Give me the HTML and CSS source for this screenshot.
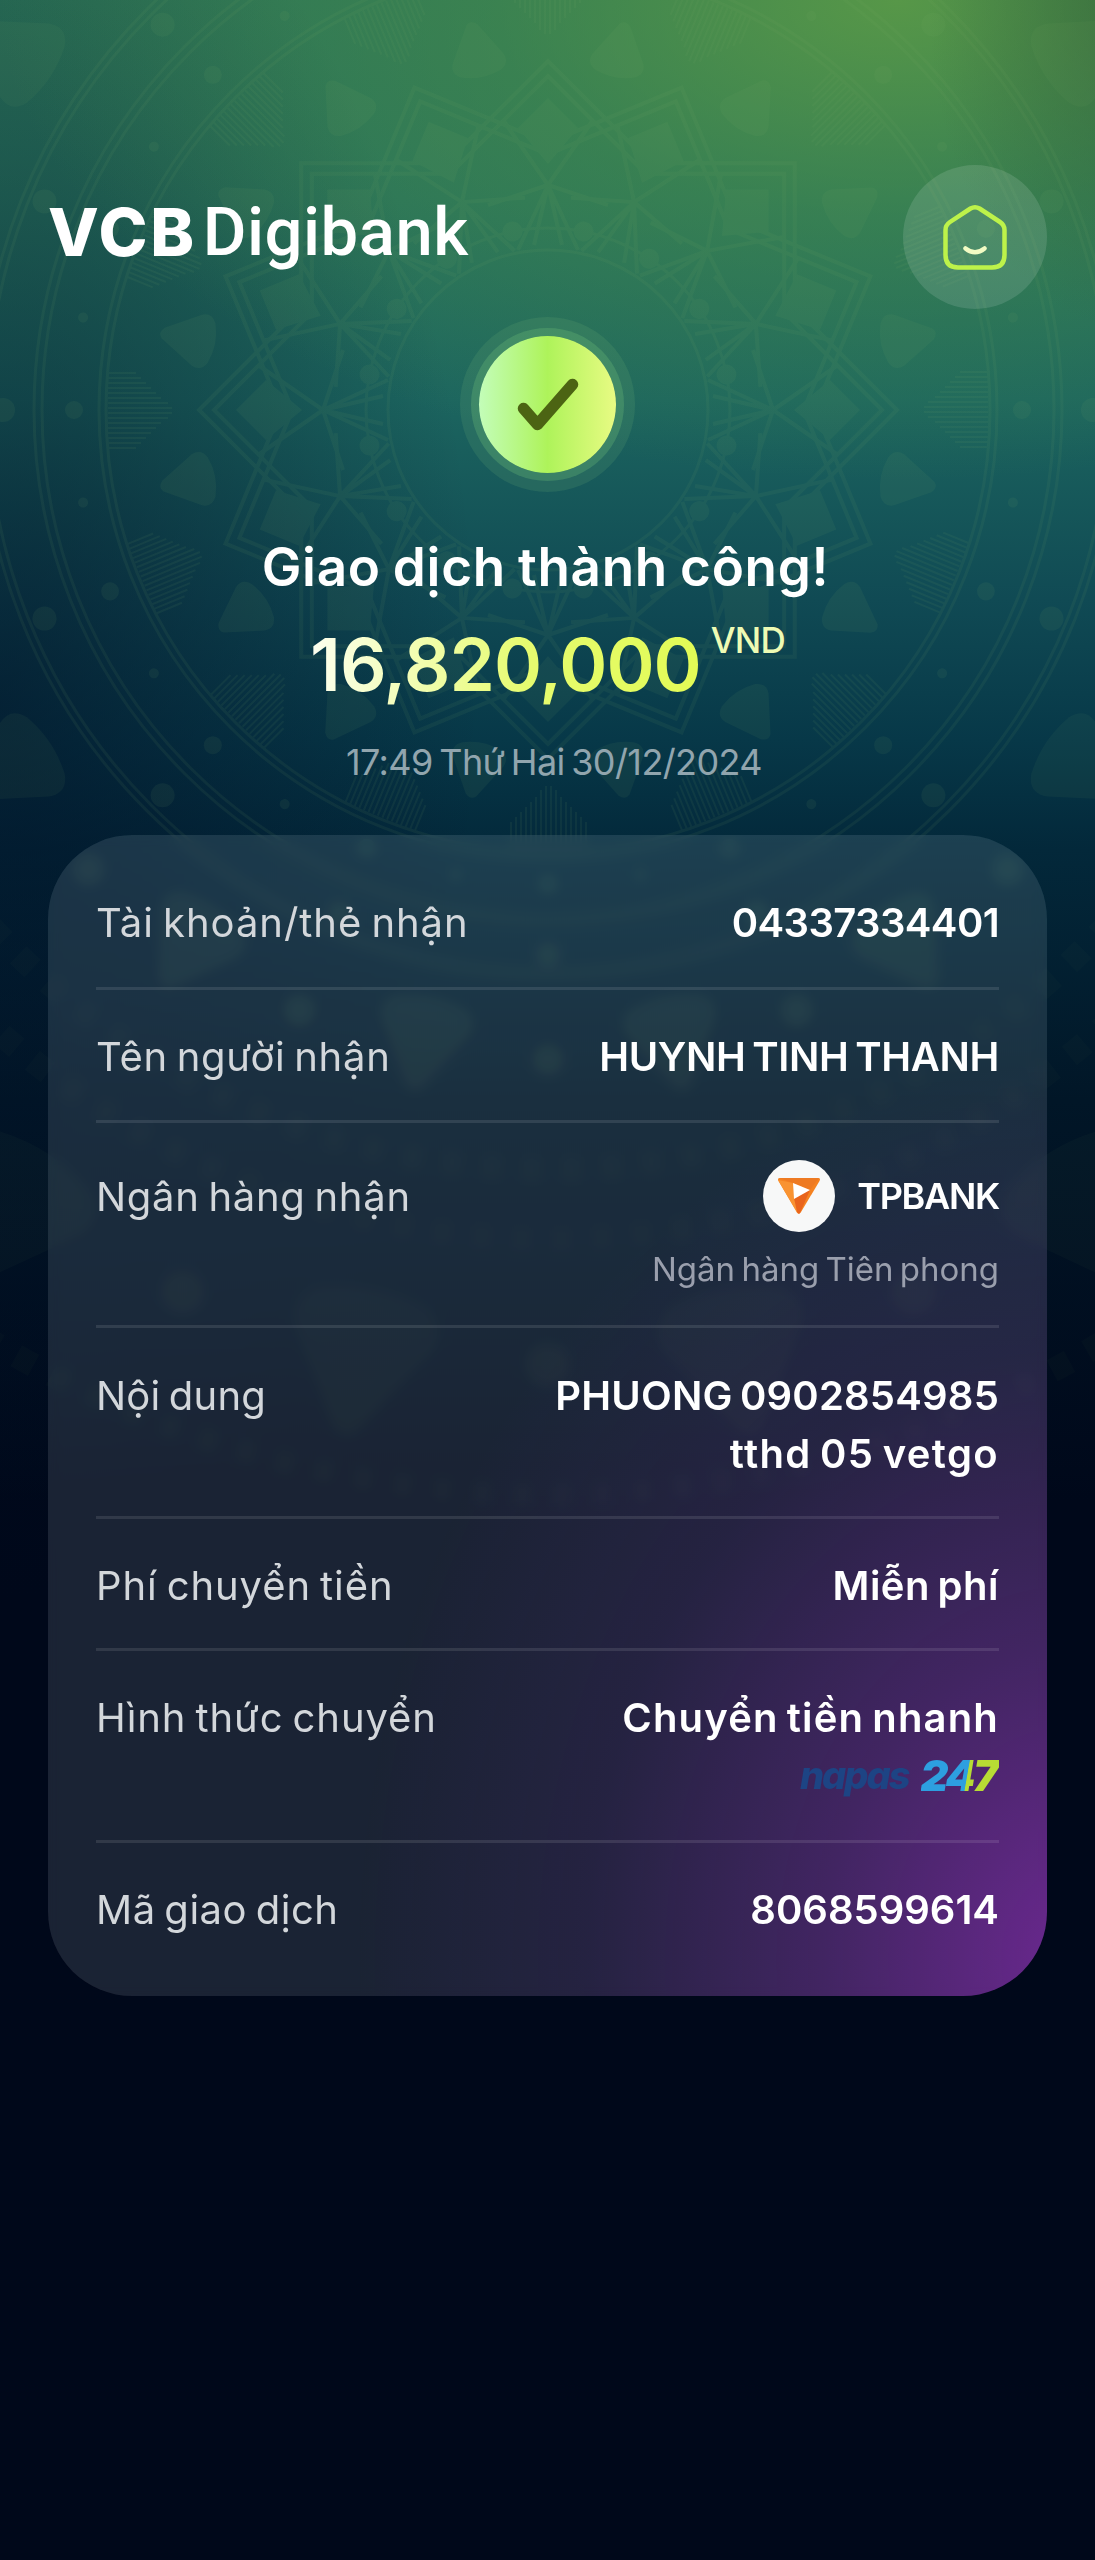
FILE: index.html
```html
<!DOCTYPE html>
<html lang="vi">
<head>
<meta charset="utf-8">
<title>VCB Digibank</title>
<link rel="stylesheet" href="styles.css">
</head>
<body>
<main class="screen">
  <svg class="mandala" viewBox="-1100 -1100 2200 2200" aria-hidden="true">
    <defs>
      <g id="wedge">
        <path d="M-112-237 0-349 112-237M-92-242 0-334 92-242M0-225-45-290M0-225 45-290M0-225-30-160M0-225 30-160M0-225-14-165M0-225 14-165M0-225-60-205M0-225 60-205" fill="none" stroke="currentColor" stroke-width="4"/>
        <path d="M0-312 30-282 0-246-30-282Z" fill="currentColor"/>
        <path d="M-38-440V-412M-33-440V-407M-28-440V-402M-23-440V-397M-18-440V-392M-13-440V-387M-8-440V-380M-3-440V-376M2-440V-376M7-440V-380M12-440V-387M17-440V-392M22-440V-397M27-440V-402M32-440V-407M37-440V-412" fill="none" stroke="currentColor" stroke-width="2"/>
        <circle cx="0" cy="-474" r="9" fill="currentColor"/>
        <circle cx="0" cy="-545" r="12" fill="currentColor"/>
        <circle cx="0" cy="-650" r="15" fill="currentColor"/>
        <circle cx="0" cy="-955" r="22" fill="currentColor" opacity=".6"/>
        <g transform="rotate(11.25)" fill="currentColor">
          <path d="M-5-393Q0-398 6-392L26-358Q30-348 20-343Q0-336-20-343Q-30-348-26-358Z"/>
          <path d="M-8-690Q0-698 9-688L44-630Q52-612 34-604Q0-594-34-604Q-52-612-44-630Z" opacity=".8"/>
          <path d="M-12-1040Q0-1052 14-1038L70-945Q80-920 54-904Q0-888-54-904Q-80-920-70-945Z" opacity=".45"/>
          <circle cx="0" cy="-182" r="10"/>
          <circle cx="0" cy="-474" r="5"/>
        </g>
      </g>
      <g id="w2"><use href="#wedge"/><use href="#wedge" transform="rotate(22.5)"/></g>
      <g id="w4"><use href="#w2"/><use href="#w2" transform="rotate(45)"/></g>
      <g id="w8"><use href="#w4"/><use href="#w4" transform="rotate(90)"/></g>
    </defs>
    <use href="#w8"/><use href="#w8" transform="rotate(180)"/>
    <g fill="none" stroke="currentColor" stroke-width="3">
      <circle r="160"/><circle r="182"/><circle r="442"/><circle r="449"/><circle r="506"/><circle r="514"/>
      <circle r="560"/><circle r="567"/>
    </g>
    <g fill="none" stroke="currentColor" stroke-width="24" stroke-dasharray="20 20" opacity=".3">
      <circle r="760"/><circle r="830"/><circle r="1085"/>
    </g>
  </svg>

  <header class="top">
    <div class="brand"><span class="brand-vcb">VCB</span><span class="brand-digi">Digibank</span></div>
    <div class="home">
      <svg viewBox="0 0 66 66" width="66" height="66" fill="none" stroke-linecap="round" stroke-linejoin="round">
        <path d="M28.500 4.500Q33 2 37.500 4.500L58 18Q62.500 21 62.500 26V51Q62.500 63.500 50 63.500H16Q3.500 63.500 3.500 51V26Q3.500 21 8 18Z" stroke="#bdf24a" stroke-width="4.500"/>
        <path d="M23.500 44.500Q33 52 42.500 44.500" stroke="#f2fbc4" stroke-width="4.500"/>
      </svg>
    </div>
  </header>

  <section class="result">
    <div class="badge">
      <svg viewBox="0 0 62 54" width="62" height="54" fill="none" stroke="#4c6413" stroke-width="11.500" stroke-linecap="round" stroke-linejoin="round"><path d="M6.500 30.500 20.500 46.500 55.500 6.500"/></svg>
    </div>
    <h1 class="title">Giao dịch thành công!</h1>
    <div class="amount"><span class="sum">16,820,000</span><span class="cur">VND</span></div>
    <div class="date">17:49 Thứ Hai 30/12/2024</div>
  </section>

  <section class="card">
    <div class="row r1"><span class="label">Tài khoản/thẻ nhận</span><span class="value">04337334401</span></div>
    <div class="row r2"><span class="label">Tên người nhận</span><span class="value">HUYNH TINH THANH</span></div>
    <div class="row r3"><span class="label">Ngân hàng nhận</span>
      <div class="stack">
        <div class="bank">
          <span class="bank-logo">
            <svg viewBox="0 0 44 40" width="44" height="40">
              <path d="M3 1H41Q44 1 42.500 4L24 35Q22 38 20 35L1.500 4Q0 1 3 1Z" fill="#f58220"/>
              <path d="M2 1H42L33 13 16 6Z" fill="#ee7a22"/>
              <path d="M1 3 16 6 17 21 22 37Q20 37 19 34Z" fill="#f99331"/>
              <path d="M17 21 33 13 23 36Q22 38 20 35Z" fill="#e9641c"/>
              <path d="M16 6 33 13 17 22Z" fill="#fff"/>
            </svg>
          </span>
          <span class="bank-name">TPBANK</span>
        </div>
        <span class="bank-full">Ngân hàng Tiên phong</span>
      </div>
    </div>
    <div class="row r4"><span class="label">Nội dung</span>
      <div class="stack"><span class="value">PHUONG 0902854985</span><span class="value value-note">tthd 05 vetgo</span></div>
    </div>
    <div class="row r5"><span class="label">Phí chuyển tiền</span><span class="value">Miễn phí</span></div>
    <div class="row r6"><span class="label">Hình thức chuyển</span>
      <div class="stack"><span class="value">Chuyển tiền nhanh</span>
        <div class="napas"><span class="napas-word">napas</span><span class="napas-num">247</span></div>
      </div>
    </div>
    <div class="row r7"><span class="label">Mã giao dịch</span><span class="value">8068599614</span></div>
  </section>
</main>
</body>
</html>
```
FILE: styles.css
```css
* { box-sizing: border-box; }
body { margin: 0; background: #00081a; font-family: Inter, "Noto Sans", sans-serif; color: #fff; }

.screen {
  position: relative;
  height: 2560px;
  overflow: hidden;
  display: flex;
  flex-direction: column;
  padding: 165px 48px 0;
  background:
    radial-gradient(ellipse 200px 330px at 103% 0, rgba(50, 90, 50, .5), transparent),
    radial-gradient(ellipse 900px 480px at 82% 0, rgba(98, 160, 68, .8), rgba(80, 150, 70, .42) 45%, transparent 100%),
    radial-gradient(ellipse 480px 900px at 0 700px, rgba(1, 16, 38, .6), transparent),
    linear-gradient(180deg, #2b7358 0, #26705c 200px, #1c655f 400px, #104a54 600px, #073848 740px, #03283a 850px, #011627 1100px, #00081a 1500px);
}
.mandala {
  position: absolute;
  left: -552px;
  top: -690px;
  width: 2200px;
  height: 2200px;
  color: #7fae6a;
  opacity: .08;
}

.top { position: relative; display: flex; justify-content: space-between; align-items: flex-start; }
.brand { display: flex; gap: 6px; line-height: 80px; margin-top: 27px; white-space: nowrap; }
.brand-vcb { font-size: 66px; font-weight: 800; letter-spacing: 2.6px; }
.brand-digi { font-size: 67px; font-weight: 500; font-family: Roboto, sans-serif; letter-spacing: .5px; }
.home {
  width: 144px; height: 144px; border-radius: 50%;
  display: flex; align-items: center; justify-content: center;
  background: rgba(255, 255, 255, .12);
}

.result { position: relative; display: flex; flex-direction: column; align-items: center; white-space: nowrap; }
.badge {
  width: 137px; height: 137px; border-radius: 50%; margin-top: 27px;
  display: flex; align-items: center; justify-content: center;
  background: linear-gradient(90deg, #c3fdb9, #aef35a 50%, #e8fb83);
  box-shadow: 0 0 0 8px rgba(110, 190, 120, .3), 0 0 0 19px rgba(110, 180, 120, .17);
}
.title { margin: 58px 0 0; padding-right: 4px; font-size: 53px; line-height: 72px; font-weight: 600; letter-spacing: .7px; word-spacing: -2px; }
.amount { display: flex; margin-top: 20px; }
.sum {
  font-size: 73px; line-height: 84px; font-weight: 600; letter-spacing: -1px;
  background: linear-gradient(90deg, #fdfff0, #e6fb70 55%, #e2fb55);
  background-clip: text; -webkit-background-clip: text; color: transparent;
}
.cur { font-size: 35px; line-height: 42px; font-weight: 500; color: #eefbb4; margin: -4px 0 0 10px; letter-spacing: -.8px; }
.date { font-size: 36px; line-height: 50px; color: #91a5ae; margin-top: 30px; padding-left: 13px; letter-spacing: -.6px; word-spacing: -3px; }

.card {
  position: absolute; left: 48px; top: 835px; width: 999px; height: 1161px;
  border-radius: 84px; padding: 0 48px;
  background:
    radial-gradient(ellipse 720px 900px at 103% 97%, rgba(125, 42, 165, .82), rgba(105, 40, 145, .5) 35%, rgba(80, 35, 120, .2) 68%, transparent),
    rgba(230, 242, 255, .115);
  backdrop-filter: blur(6px);
}
.row { display: flex; justify-content: space-between; align-items: flex-start; border-bottom: 3px solid rgba(255, 255, 255, .1); white-space: nowrap; font-size: 40px; line-height: 58px; word-spacing: -3px; }
.label { color: #d3d7db; letter-spacing: .7px; }
.value { font-weight: 600; letter-spacing: .2px; }
.stack { display: flex; flex-direction: column; align-items: flex-end; }
.r1 { height: 155px; padding-top: 59px; }
.r1 .label { letter-spacing: .95px; }
.r1 .value { letter-spacing: -.6px; }
.r2 { height: 133px; padding-top: 38px; }
.r2 .value { letter-spacing: -.35px; }
.r3 { height: 205px; padding-top: 45px; }
.r4 { height: 191px; padding-top: 39px; }
.r4 .label { letter-spacing: .2px; }
.r4 .value-note { letter-spacing: 1.35px; }
.r5 { height: 132px; padding-top: 38px; }
.r5 .label { letter-spacing: .9px; }
.r5 .value { letter-spacing: .5px; }
.r6 { height: 192px; padding-top: 38px; }
.r6 .label { letter-spacing: .9px; }
.r6 .value { letter-spacing: 1.15px; }
.r7 { border: 0; padding-top: 38px; }
.r7 .label { letter-spacing: .5px; }
.r7 .value { letter-spacing: 0; }
.bank { display: flex; align-items: center; gap: 22px; margin-top: -8px; height: 72px; }
.bank-logo { width: 72px; height: 72px; border-radius: 50%; background: #f7f8f8; display: flex; align-items: center; justify-content: center; padding-top: 2px; }
.bank-name { font-size: 36px; font-weight: 600; letter-spacing: -1.3px; }
.bank-full { font-size: 33px; line-height: 46px; color: #9a9fad; margin-top: 14px; letter-spacing: 0; }
.napas { display: flex; gap: 12px; line-height: 44px; font-style: italic; margin-top: 6px; }
.napas-word { font-size: 38px; font-weight: 800; color: #1d4484; letter-spacing: -2px; }
.napas-num {
  font-size: 43px; font-weight: 900; letter-spacing: -2.5px; padding-right: 3px;
  background: linear-gradient(100deg, #2d9fe0 58%, #b7dc34 59%);
  background-clip: text; -webkit-background-clip: text; color: transparent;
}
```
